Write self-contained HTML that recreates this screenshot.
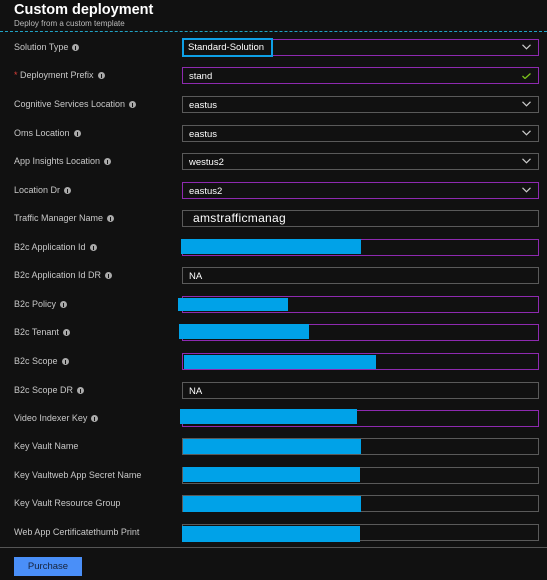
<!DOCTYPE html>
<html><head><meta charset="utf-8"><style>
*{margin:0;padding:0;box-sizing:border-box}
body{width:547px;height:580px;background:#111;overflow:hidden;position:relative;font-family:"Liberation Sans",sans-serif;color:#c8c8c8}
.t{position:absolute;left:14px;top:2px;font-size:14.5px;font-weight:bold;color:#fff}
.s{position:absolute;left:14px;top:19px;font-size:8px;color:#bbb}
.dash{position:absolute;left:0;right:0;top:31px;border-top:1px dashed #1fa3c4}
.l{position:absolute;left:14px;font-size:9px;color:#c8c8c8;white-space:nowrap}
.i{display:inline-block;width:7px;height:7px;border-radius:50%;background:#aaa;margin-left:4px;vertical-align:-0.5px;position:relative}
.i:after{content:"";position:absolute;left:3px;top:2px;width:1px;height:4px;background:#111}
.b{position:absolute;left:182px;width:357px;height:17px;border:1px solid #5a5a5a;font-size:9.5px;color:#fff;padding-left:6px;line-height:17px}
.p{border-color:#8e2ab0}
.ch{position:absolute;right:7px;top:4px;width:9px;height:6px}
.r{position:absolute;background:#00a2e8}
.hr{position:absolute;left:0;right:0;top:547px;border-top:1px solid #555}
.btn{position:absolute;left:14px;top:557px;width:68px;height:19px;background:#4a8ff8;color:#16223a;font-size:9.5px;text-align:center;line-height:19px}
</style></head><body>
<div class="t">Custom deployment</div>
<div class="s">Deploy from a custom template</div>
<div class="dash"></div>

<div class="l" style="top:42px">Solution Type<span class="i"></span></div>
<div class="b p" style="top:39px">&nbsp;<svg class="ch" viewBox="0 0 9 6"><path d="M0.5 0.8L4.5 4.8L8.5 0.8" stroke="#ccc" fill="none" stroke-width="1.2"/></svg></div>
<div style="position:absolute;left:182px;top:38px;width:91px;height:19px;border:2px solid #0ea0e6;font-size:9.5px;color:#fff;padding-left:4px;line-height:16px">Standard-Solution</div>

<div class="l" style="top:70px"><span style="color:#e0403a">*</span> Deployment Prefix<span class="i"></span></div>
<div class="b p" style="top:67px">stand<svg class="ch" viewBox="0 0 9 6" style="top:5px"><path d="M0.5 3L3 5.5L8.5 0.5" stroke="#7ac21a" fill="none" stroke-width="1.3"/></svg></div>

<div class="l" style="top:99px">Cognitive Services Location<span class="i"></span></div>
<div class="b" style="top:96px">eastus<svg class="ch" viewBox="0 0 9 6"><path d="M0.5 0.8L4.5 4.8L8.5 0.8" stroke="#ccc" fill="none" stroke-width="1.2"/></svg></div>

<div class="l" style="top:128px">Oms Location<span class="i"></span></div>
<div class="b" style="top:125px">eastus<svg class="ch" viewBox="0 0 9 6"><path d="M0.5 0.8L4.5 4.8L8.5 0.8" stroke="#ccc" fill="none" stroke-width="1.2"/></svg></div>

<div class="l" style="top:156px">App Insights Location<span class="i"></span></div>
<div class="b" style="top:153px">westus2<svg class="ch" viewBox="0 0 9 6"><path d="M0.5 0.8L4.5 4.8L8.5 0.8" stroke="#ccc" fill="none" stroke-width="1.2"/></svg></div>

<div class="l" style="top:185px">Location Dr<span class="i"></span></div>
<div class="b p" style="top:182px">eastus2<svg class="ch" viewBox="0 0 9 6"><path d="M0.5 0.8L4.5 4.8L8.5 0.8" stroke="#ccc" fill="none" stroke-width="1.2"/></svg></div>

<div class="l" style="top:213px">Traffic Manager Name<span class="i"></span></div>
<div class="b" style="top:210px;font-size:12px;padding-left:10px;letter-spacing:0.3px;line-height:15px">amstrafficmanag</div>

<div class="l" style="top:242px">B2c Application Id<span class="i"></span></div>
<div class="b p" style="top:239px"></div>
<div class="r" style="left:181px;top:239px;width:180px;height:15px"></div>

<div class="l" style="top:270px">B2c Application Id DR<span class="i"></span></div>
<div class="b" style="top:267px">NA</div>

<div class="l" style="top:299px">B2c Policy<span class="i"></span></div>
<div class="b p" style="top:296px"></div>
<div class="r" style="left:178px;top:298px;width:110px;height:13px"></div>

<div class="l" style="top:327px">B2c Tenant<span class="i"></span></div>
<div class="b p" style="top:324px"></div>
<div class="r" style="left:179px;top:324px;width:130px;height:15px"></div>

<div class="l" style="top:356px">B2c Scope<span class="i"></span></div>
<div class="b p" style="top:353px"></div>
<div class="r" style="left:184px;top:355px;width:192px;height:14px"></div>

<div class="l" style="top:385px">B2c Scope DR<span class="i"></span></div>
<div class="b" style="top:382px">NA</div>

<div class="l" style="top:413px">Video Indexer Key<span class="i"></span></div>
<div class="b p" style="top:410px"></div>
<div class="r" style="left:180px;top:409px;width:177px;height:15px"></div>

<div class="l" style="top:441px">Key Vault Name</div>
<div class="b" style="top:438px"></div>
<div class="r" style="left:183px;top:439px;width:178px;height:15px"></div>

<div class="l" style="top:470px">Key Vaultweb App Secret Name</div>
<div class="b" style="top:467px"></div>
<div class="r" style="left:183px;top:467px;width:177px;height:15px"></div>

<div class="l" style="top:498px">Key Vault Resource Group</div>
<div class="b" style="top:495px"></div>
<div class="r" style="left:183px;top:496px;width:178px;height:16px"></div>

<div class="l" style="top:527px">Web App Certificatethumb Print</div>
<div class="b" style="top:524px"></div>
<div class="r" style="left:182px;top:526px;width:178px;height:16px"></div>

<div class="hr"></div>
<div class="btn">Purchase</div>
</body></html>
